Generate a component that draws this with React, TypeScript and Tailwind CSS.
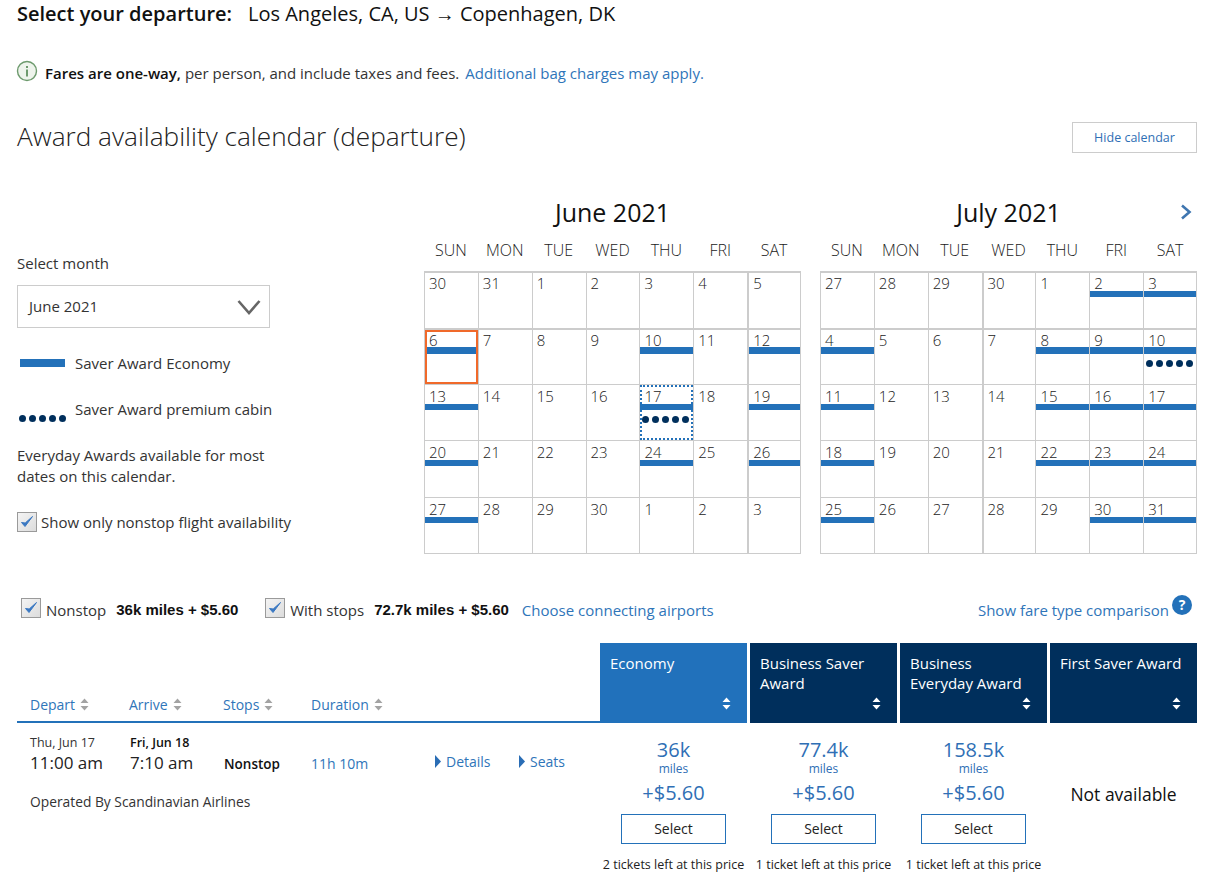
const FONT = { fontFamily: '"Open Sans", sans-serif' };
const ARIAL = { fontFamily: '"Liberation Sans", sans-serif' };

type Cell = { n: number; bar?: boolean; dots?: boolean; today?: boolean; focus?: boolean };

const DAYS = ["SUN", "MON", "TUE", "WED", "THU", "FRI", "SAT"];

const mk = (list: number[], bars: number[], extra: Partial<Record<number, Partial<Cell>>> = {}): Cell[] =>
  list.map((n, i) => ({ n, bar: bars.includes(i), ...extra[i] }));

const june = mk(
  [30, 31, 1, 2, 3, 4, 5, 6, 7, 8, 9, 10, 11, 12, 13, 14, 15, 16, 17, 18, 19, 20, 21, 22, 23, 24, 25, 26, 27, 28, 29, 30, 1, 2, 3],
  [7, 11, 13, 14, 18, 20, 21, 25, 27, 28],
  { 7: { today: true }, 18: { dots: true, focus: true } }
);

const july = mk(
  [27, 28, 29, 30, 1, 2, 3, 4, 5, 6, 7, 8, 9, 10, 11, 12, 13, 14, 15, 16, 17, 18, 19, 20, 21, 22, 23, 24, 25, 26, 27, 28, 29, 30, 31],
  [5, 6, 7, 11, 12, 13, 14, 18, 19, 20, 21, 25, 26, 27, 28, 33, 34],
  { 13: { dots: true } }
);

const Dots = ({ className = "" }: { className?: string }) => (
  <div className={`flex gap-[3px] ${className}`}>
    {[0, 1, 2, 3, 4].map((i) => (
      <span key={i} className="w-[7px] h-[7px] rounded-full bg-[#002f5c]" />
    ))}
  </div>
);

const Check = ({ className = "" }: { className?: string }) => (
  <span className={`w-[20px] h-[20px] shrink-0 border border-[#9a9a9a] bg-gradient-to-br from-[#f4f4f4] to-[#dcdcdc] flex items-center justify-center ${className}`}>
    <svg width="16" height="16" viewBox="0 0 16 16">
      <path d="M2.5 8.5 L6 12.5 L13.5 2.5 L6.2 9 Z" fill="#3a78c2" stroke="#3a78c2" strokeWidth="1" strokeLinejoin="round" />
    </svg>
  </span>
);

const Sort = ({ color = "#a3a3a3" }: { color?: string }) => (
  <svg width="9" height="13" viewBox="0 0 9 13" className="shrink-0">
    <path d="M4.5 0.5 L8.5 5 H0.5 Z M0.5 8 H8.5 L4.5 12.5 Z" fill={color} />
  </svg>
);

const Tri = () => (
  <svg width="6" height="13" viewBox="0 0 6 13" className="shrink-0">
    <path d="M0 0 L6 6.5 L0 13 Z" fill="#2a6db5" />
  </svg>
);

const Month = ({ title, cells, next, thickCol }: { title: string; cells: Cell[]; next?: boolean; thickCol: number }) => (
  <div className="w-[377px]">
    <div className="grid grid-cols-[1fr_auto_1fr] items-center h-[32px] mt-[41px]">
      <span />
      <div className="text-[25px] leading-[32px] text-[#111]">{title}</div>
      <div className="flex justify-end pr-[5px]">
        {next && (
          <svg width="12" height="16" viewBox="0 0 12 16">
            <path d="M2 1.5 L9.5 8 L2 14.5" fill="none" stroke="#3f76b0" strokeWidth="2.6" />
          </svg>
        )}
      </div>
    </div>
    <div className="grid grid-cols-7 mt-[10px] h-[24px]">
      {DAYS.map((d) => (
        <div key={d} className="text-center text-[16px] leading-[24px] font-light text-[#222]">
          {d}
        </div>
      ))}
    </div>
    <div className="grid grid-cols-7 mt-[9px] border-t-2 border-b border-[#cccccc]">
      {cells.map((c, i) => (
        <div
          key={i}
          className={`relative border-l border-[#cccccc] ${i < 7 ? "h-[55px]" : "h-[56.2px] border-t"} ${i > 6 && i < 14 ? "border-t-2" : ""} ${i % 7 === 6 ? "border-r" : ""} ${i % 7 === thickCol ? "border-l-2" : ""}`}
        >
          <div className={`pl-[4px] text-[15px] leading-[20px] font-light text-[#222] ${i < 7 ? "h-[18px]" : i < 14 ? "h-[17px]" : "h-[19px] pt-[1px]"}`}>{c.n}</div>
          {c.bar && <div className={`bg-[#2371b9] ${i > 6 && i < 14 ? "h-[7px]" : "h-[6px]"}`} />}
          {c.dots && <Dots className="mt-[6px] ml-[2px]" />}
          {c.today && <div className="absolute inset-0 border-[2px] border-[#f0692a]" />}
          {c.focus && <div className="absolute inset-0 border-[2px] border-dotted border-[#2371b9]" />}
        </div>
      ))}
    </div>
  </div>
);

const Fare = ({ miles, tickets }: { miles: string; tickets: string }) => (
  <div className="w-[147px] flex flex-col items-center">
    <div className="mt-[14px] text-[20px] leading-[25px] text-[#2f6fb5]">{miles}</div>
    <div className="text-[12px] leading-[14px] text-[#2f6fb5]">miles</div>
    <div className="mt-[3px] text-[20px] leading-[28px] text-[#2f6fb5]">+$5.60</div>
    <button className="mt-[7px] w-[105px] h-[30px] border border-[#2371b9] text-[14px] text-[#222] bg-white">Select</button>
    <div className="mt-[12px] text-[12.5px] leading-[18px] text-[#222] whitespace-nowrap">{tickets}</div>
  </div>
);

const HeadCell = ({ label, dark }: { label: string; dark?: boolean }) => (
  <div className={`w-[147px] h-[80px] px-[10px] pt-[10px] pb-[13px] flex flex-col justify-between ${dark ? "bg-[#002f5c]" : "bg-[#2171bb]"}`}>
    <div className="text-[15px] leading-[20px] text-white">{label}</div>
    <div className="flex justify-end pr-[6px]">
      <Sort color="#ffffff" />
    </div>
  </div>
);

const SortLabel = ({ label, w }: { label: string; w: string }) => (
  <div className={`flex items-center gap-[5px] text-[14px] text-[#2f75b9] ${w}`}>
    {label}
    <Sort />
  </div>
);

export default function App() {
  return (
    <div style={FONT} className="w-[1232px] h-[883px] overflow-hidden bg-white pl-[17px] text-[#333]">
      <div className="w-[1180px]">
        <div className="h-[30px] pb-[3px] flex items-center text-[20px] text-[#111]">
          <span className="font-semibold">Select your departure:</span>
          <span className="ml-[16px]">Los Angeles, CA, US → Copenhagen, DK</span>
        </div>

        <div className="mt-[31px] h-[24px] flex items-center text-[15px]">
          <svg width="22" height="22" viewBox="0 0 22 22" className="-mt-[4px] -ml-[1px] mr-[7px] shrink-0">
            <circle cx="11" cy="11" r="9.5" fill="#eef4ec" stroke="#6d9a6d" strokeWidth="1.4" />
            <rect x="10" y="9.5" width="2" height="7" fill="#6d9a6d" />
            <rect x="10" y="6" width="2" height="2" fill="#6d9a6d" />
          </svg>
          <span className="font-semibold text-[#111]">Fares are one-way,</span>
          <span className="ml-[4px]">per person, and include taxes and fees.</span>
          <span className="ml-[6px] text-[#2f75b9]">Additional bag charges may apply.</span>
        </div>

        <div className="mt-[35px] h-[35px] flex items-center justify-between">
          <div className="pb-[2px] text-[26.2px] font-light text-[#222]">Award availability calendar (departure)</div>
          <button className="w-[125px] h-[31px] pt-[1px] border border-[#cccccc] text-[12.5px] text-[#2f6fb5]">Hide calendar</button>
        </div>

        <div className="flex">
          <div className="w-[407px] shrink-0 text-[15px]">
            <div className="mt-[98px] h-[20px] leading-[20px]">Select month</div>
            <div className="mt-[12px] w-[253px] h-[43px] border border-[#cccccc] flex items-center justify-between pl-[11px] pr-[8px]">
              June 2021
              <svg width="24" height="16" viewBox="0 0 24 16">
                <path d="M1.5 2 L12 14 L22.5 2" fill="none" stroke="#666" strokeWidth="2.6" />
              </svg>
            </div>
            <div className="mt-[25px] h-[20px] flex items-center">
              <div className="ml-[3px] w-[45px] h-[8px] bg-[#2371b9]" />
              <div className="ml-[10px]">Saver Award Economy</div>
            </div>
            <div className="mt-[26px] h-[20px] flex">
              <Dots className="ml-[2px] mt-[16px]" />
              <div className="ml-[9px] leading-[20px]">Saver Award premium cabin</div>
            </div>
            <div className="mt-[26px] w-[270px] leading-[21px]">Everyday Awards available for most dates on this calendar.</div>
            <div className="mt-[24px] flex items-center gap-[4px]">
              <Check />
              Show only nonstop flight availability
            </div>
          </div>
          <Month title="June 2021" cells={june} thickCol={6} />
          <div className="w-[19px]" />
          <Month title="July 2021" cells={july} next thickCol={3} />
        </div>

        <div className="mt-[44px] h-[24px] flex items-center text-[15px] pl-[4px]">
          <Check className="-mt-[3px]" />
          <span className="ml-[5px]">Nonstop</span>
          <span className="ml-[10px] w-[149px] font-bold text-[15px] text-[#111]" style={ARIAL}>36k miles + $5.60</span>
          <Check className="-mt-[3px]" />
          <span className="ml-[5px]">With stops</span>
          <span className="ml-[10px] font-bold text-[15px] text-[#111]" style={ARIAL}>72.7k miles + $5.60</span>
          <span className="ml-[13px] text-[#2f75b9]">Choose connecting airports</span>
          <span className="ml-auto text-[#2f75b9]">Show fare type comparison</span>
          <span className="ml-[3px] mr-[5px] -mt-[10px] w-[20px] h-[20px] rounded-full bg-[#2371b9] text-white text-[14px] font-bold flex items-center justify-center">?</span>
        </div>

        <div className="mt-[21px] flex">
          <div className="w-[583px] h-[80px] border-b-2 border-[#2371b9] flex items-end pb-[6px] pl-[13px]">
            <SortLabel label="Depart" w="w-[99px]" />
            <SortLabel label="Arrive" w="w-[94px]" />
            <SortLabel label="Stops" w="w-[88px]" />
            <SortLabel label="Duration" w="w-[100px]" />
          </div>
          <div className="flex gap-[3px]">
            <HeadCell label="Economy" />
            <HeadCell dark label="Business Saver Award" />
            <HeadCell dark label="Business Everyday Award" />
            <HeadCell dark label="First Saver Award" />
          </div>
        </div>

        <div className="flex">
          <div className="w-[583px] pl-[13px] pt-[12px]">
            <div className="flex">
              <div className="w-[100px]">
                <div className="text-[12.5px] leading-[16px]">Thu, Jun 17</div>
                <div className="text-[17px] leading-[24px] text-[#222]">11:00 am</div>
              </div>
              <div className="w-[94px]">
                <div className="text-[12.5px] leading-[16px] font-semibold text-[#111]">Fri, Jun 18</div>
                <div className="text-[17px] leading-[24px] text-[#222]">7:10 am</div>
              </div>
              <div className="w-[87px] pt-[18px] text-[13.5px] leading-[22px] font-semibold text-[#111]">Nonstop</div>
              <div className="w-[124px] pt-[18px] text-[14px] leading-[22px] text-[#2f75b9]">11h 10m</div>
              <div className="w-[84px] pt-[16px] flex items-center h-[38px] gap-[5px] text-[14px] text-[#2f75b9]">
                <Tri />
                Details
              </div>
              <div className="pt-[16px] flex items-center h-[38px] gap-[5px] text-[14px] text-[#2f75b9]">
                <Tri />
                Seats
              </div>
            </div>
            <div className="mt-[17px] text-[13.8px] leading-[20px]">Operated By Scandinavian Airlines</div>
          </div>
          <div className="flex gap-[3px]">
            <Fare miles="36k" tickets="2 tickets left at this price" />
            <Fare miles="77.4k" tickets="1 ticket left at this price" />
            <Fare miles="158.5k" tickets="1 ticket left at this price" />
            <div className="w-[147px] pt-[58px] text-center text-[17.5px] leading-[26px] text-[#111]">Not available</div>
          </div>
        </div>
      </div>
    </div>
  );
}
